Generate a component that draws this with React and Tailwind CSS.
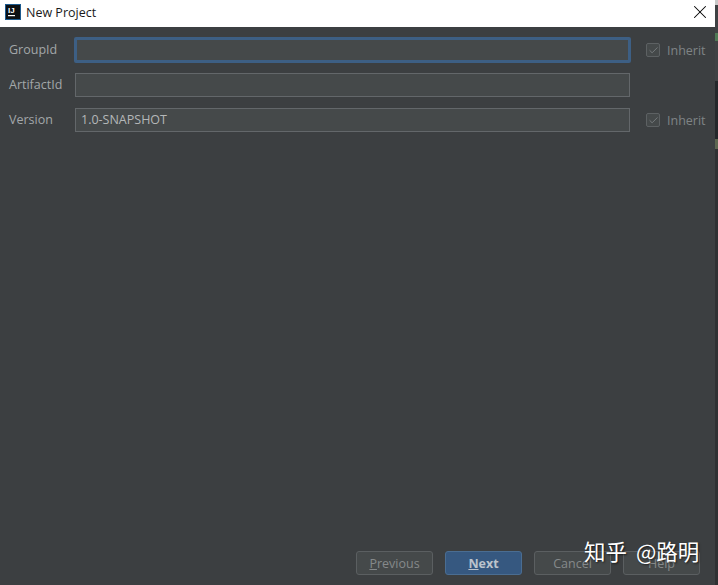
import { Check, X } from "lucide-react";

const ui = "font-['Open_Sans','Noto_Sans_CJK_SC',sans-serif]";

function Field({ label, value, focused, inherit }) {
  return (
    <div className="flex h-[24px] items-center">
      <div className="w-[75px] pl-[9px] text-[12.5px] text-[#a3a7a9]">{label}</div>
      <div
        className={
          focused
            ? "-ml-[1px] flex h-[26px] w-[557px] items-center rounded-[2px] border-[3px] border-[#3d5f84] bg-[#45494a] pl-[4px] text-[12.5px] text-[#b4b7b8]"
            : "flex h-[24px] w-[555px] items-center border border-[#63676a] bg-[#45494a] pl-[5px] text-[12.5px] text-[#b4b7b8]"
        }
      >
        {value}
      </div>
      {inherit ? (
        <div className={focused ? "ml-[15px] flex items-center" : "ml-[16px] flex items-center"}>
          <div className="flex h-[14px] w-[14px] items-center justify-center rounded-[2px] border border-[#5d6163] bg-[#45494a]">
            <Check size={11} strokeWidth={2} className="text-[#7a7e80]" />
          </div>
          <span className="ml-[7px] pt-[2px] text-[12.5px] text-[#7f8486]">Inherit</span>
        </div>
      ) : null}
    </div>
  );
}

function Btn({ letter, rest, primary }) {
  return (
    <div
      className={
        primary
          ? "flex h-[24px] w-[77px] items-center justify-center rounded-[3px] border border-[#4a6d92] bg-[#365880] pt-[2px] text-[12.5px] font-bold text-[#bbc3cc]"
          : "flex h-[24px] w-[77px] items-center justify-center rounded-[3px] border border-[#5b5f61] bg-[#45494a] pt-[2px] text-[12.5px] text-[#85898b]"
      }
    >
      {letter ? <span className="underline">{letter}</span> : null}
      {rest}
    </div>
  );
}

export default function App() {
  return (
    <div className={"relative flex h-[585px] w-[718px] overflow-hidden bg-[#2f3133] " + ui}>
      <div className="flex w-[715px] shrink-0 flex-col bg-[#3c3f41]">
        <div className="flex h-[27px] shrink-0 items-center bg-white pb-[4px] pl-[5px] pr-[4px]">
          <svg width="16" height="16" viewBox="0 0 16 16" className="shrink-0">
            <rect width="16" height="16" fill="#1c5a8e" />
            <rect x="1" y="1" width="14" height="14" fill="#0c1014" />
            <text x="3" y="9" fontSize="8" fontWeight="700" fill="#fff" fontFamily="Liberation Sans">IJ</text>
            <rect x="3" y="11" width="7" height="1.2" fill="#fff" />
          </svg>
          <span className="ml-[5px] pt-[3px] text-[12.5px] text-[#1a1a1a]">New Project</span>
          <X size={22} strokeWidth={1.1} className="ml-auto text-black" />
        </div>

        <div className="flex flex-1 flex-col gap-[11px] pt-[11px]">
          <Field label="GroupId" focused inherit />
          <Field label="ArtifactId" />
          <Field label="Version" value="1.0-SNAPSHOT" inherit />
        </div>

        <div className="flex justify-end gap-[12px] pb-[10px] pr-[15px]">
          <Btn letter="P" rest="revious" />
          <Btn letter="N" rest="ext" primary />
          <Btn rest="Cancel" />
          <Btn rest="Help" />
        </div>
      </div>

      <div className="flex flex-1 flex-col">
        <div className="h-[5px] bg-[#c9c9c9]" />
        <div className="h-[28px] bg-[#3f4244]" />
        <div className="h-[8px] bg-[#4f7a55]" />
        <div className="h-[40px] bg-[#3f4244]" />
        <div className="h-[58px] bg-[#24272a]" />
        <div className="h-[10px] bg-[#5d6650]" />
        <div className="flex-1 bg-[#2f3133]" />
      </div>

      <div className="absolute left-[584px] top-[536px] flex gap-[9px] text-[21.5px] leading-[30px] text-white [text-shadow:1px_1px_2px_rgba(0,0,0,0.6)] font-['Noto_Sans_CJK_SC',sans-serif]">
        <span>知乎</span>
        <span>@路明</span>
      </div>
    </div>
  );
}
